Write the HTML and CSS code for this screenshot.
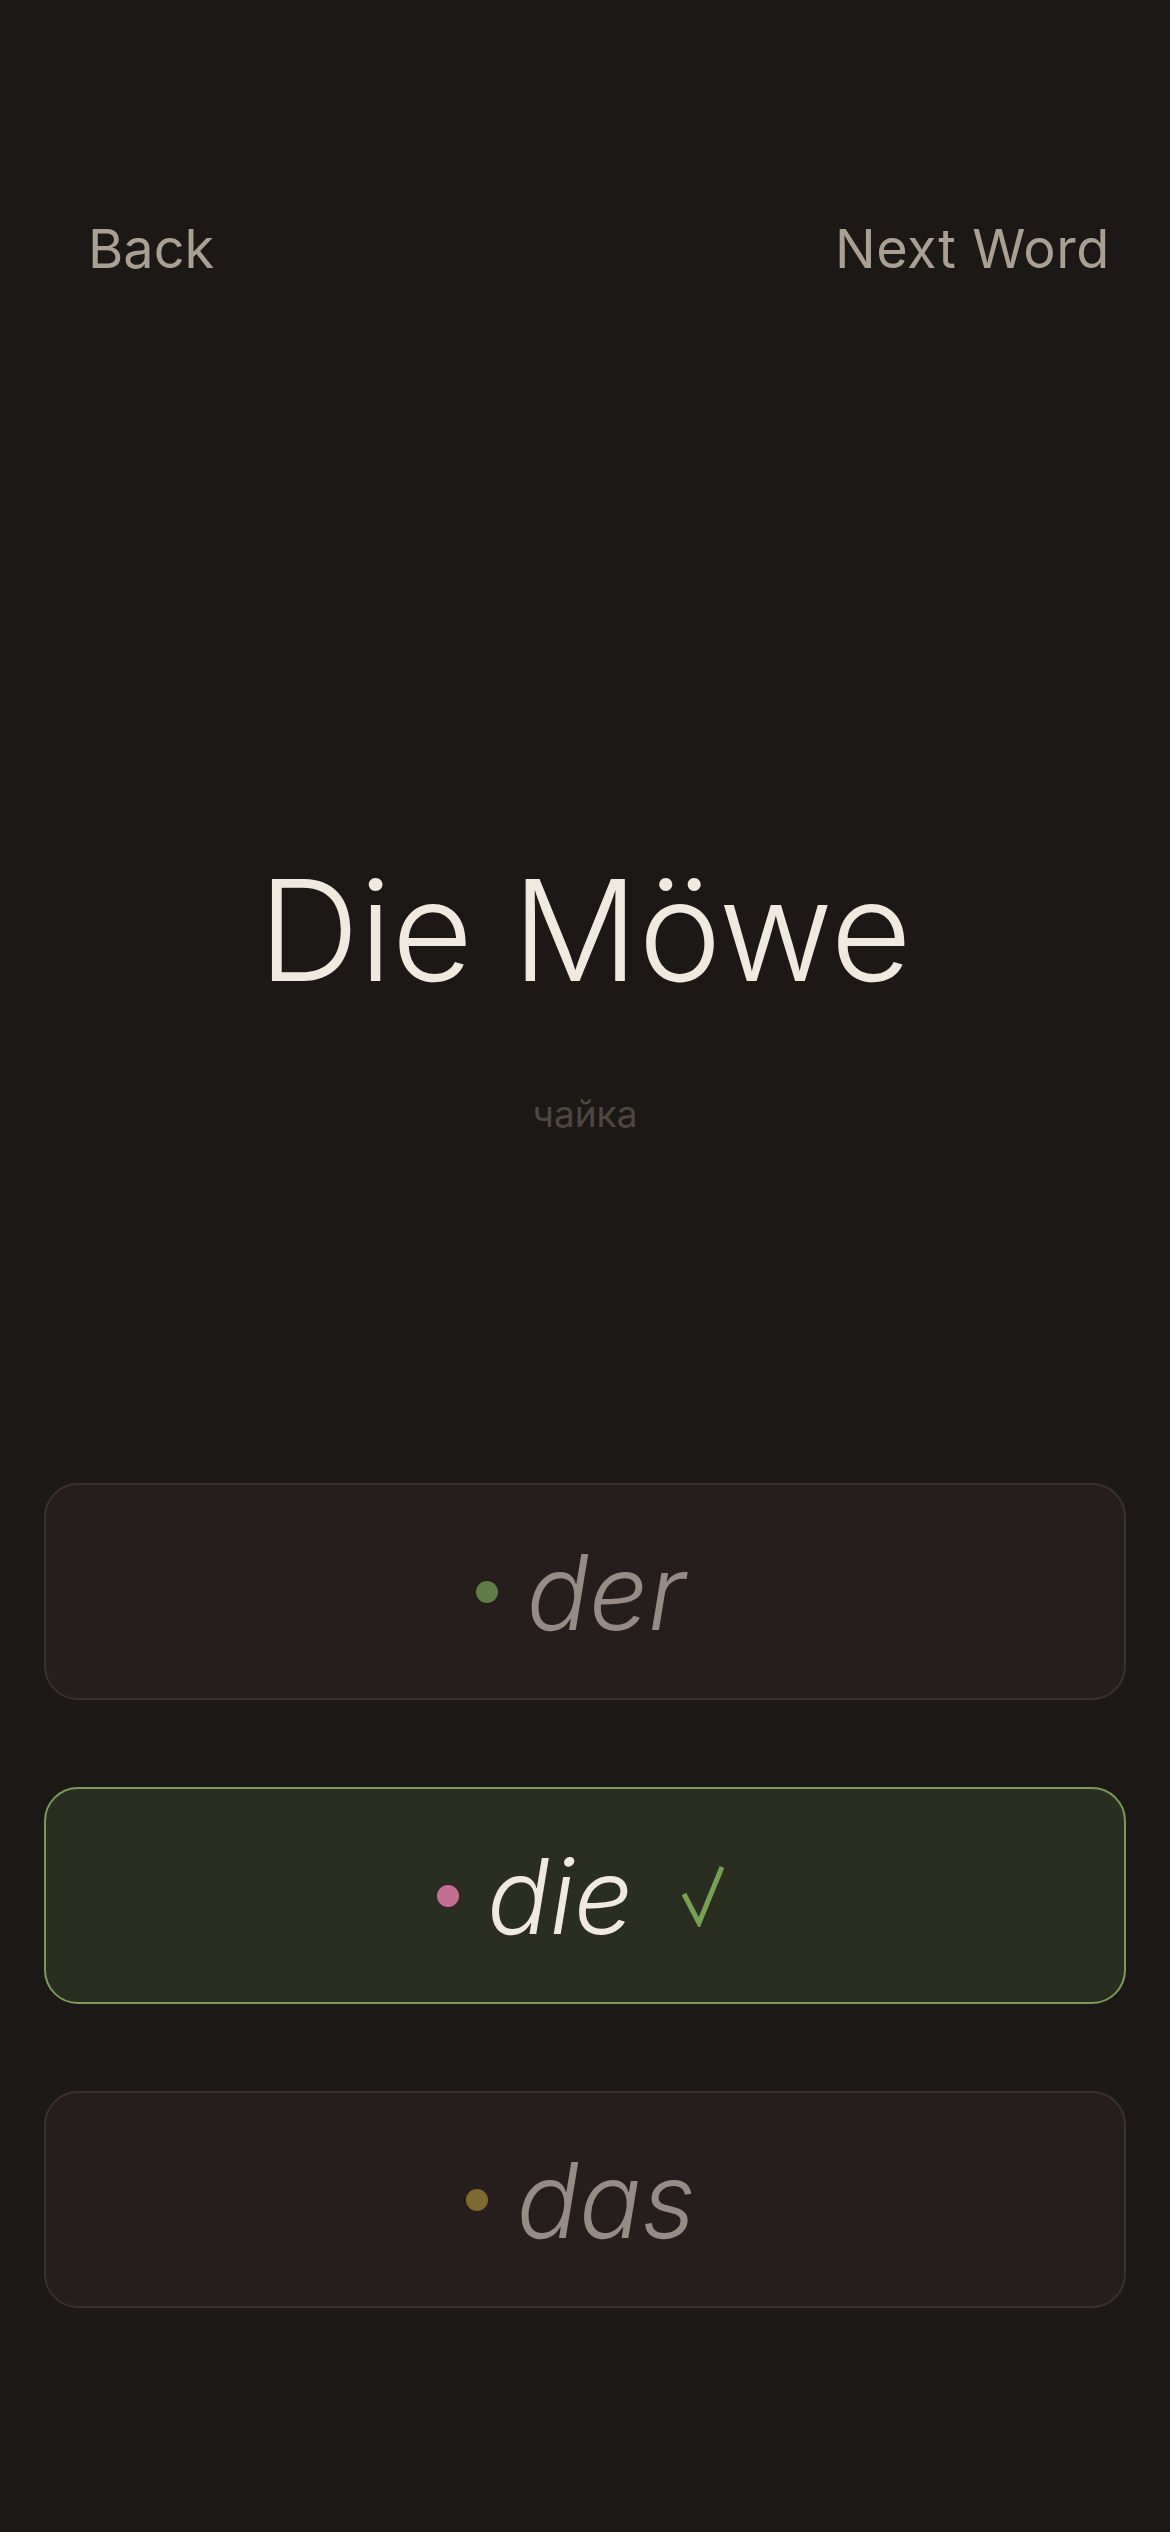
FILE: index.html
```html
<!DOCTYPE html>
<html lang="de">
<head>
    <meta charset="UTF-8">
    <meta name="viewport" content="width=device-width, initial-scale=1.0">
    <title>Artikel Quiz</title>
    <link rel="stylesheet" href="styles.css">
</head>
<body>
    <div class="screen">
        <div class="topbar">
            <span class="nav-link">Back</span>
            <span class="nav-link">Next Word</span>
        </div>

        <h1 class="word">Die Möwe</h1>
        <p class="translation">чайка</p>

        <div class="options">
            <button class="option">
                <span class="dot dot-der"></span>
                <span class="article">der</span>
            </button>
            <button class="option correct">
                <span class="dot dot-die"></span>
                <span class="article">die</span>
                <svg class="check" width="44" height="62" viewBox="0 0 44 62">
                    <polyline points="3,29 18,58 41,2" fill="none" stroke="#78a052" stroke-width="5" stroke-linejoin="miter"/>
                </svg>
            </button>
            <button class="option">
                <span class="dot dot-das"></span>
                <span class="article">das</span>
            </button>
        </div>
    </div>
</body>
</html>
```

FILE: styles.css
```css
body {
    margin: 0;
    background-color: #1c1815;
    font-family: Inter, "Noto Sans", sans-serif;
    color: #f0e9e0;
}
.screen {
    height: 2532px;
    padding: 0 44px;
    box-sizing: border-box;
    display: flex;
    flex-direction: column;
}
.topbar {
    display: flex;
    justify-content: space-between;
    margin-top: 216px;
    padding: 0 16px 0 44px;
}
.nav-link {
    font-size: 54px;
    color: #aa9f93;
}
.nav-link + .nav-link {
    letter-spacing: 0.6px;
}
.word {
    margin: 564px 0 0;
    text-align: center;
    font-size: 140px;
    font-weight: 300;
    line-height: normal;
    color: #f0e9e0;
}
.translation {
    margin: 76px 0 0;
    text-align: center;
    font-size: 37px;
    color: #4f4641;
}
.options {
    margin-top: 347px;
    display: flex;
    flex-direction: column;
    gap: 87px;
}
.option {
    height: 217px;
    box-sizing: border-box;
    display: flex;
    align-items: center;
    justify-content: center;
    background-color: #251e1c;
    border: 2px solid #3a312c;
    border-radius: 34px;
    font-family: inherit;
    padding: 0 8px 0 0;
}
.option.correct {
    background-color: #2a2e21;
    border-color: #7a9a5a;
}
.dot {
    width: 22px;
    height: 22px;
    border-radius: 50%;
    margin-right: 28px;
}
.dot-der {
    background-color: #5f7b48;
}
.dot-die {
    background-color: #c46f93;
}
.dot-das {
    background-color: #7d6a2f;
}
.article {
    font-size: 104px;
    font-weight: 300;
    font-style: italic;
    line-height: normal;
    color: #968c86;
}
.correct .article {
    color: #f0e9e0;
}
.check {
    margin-left: 48px;
}
```
